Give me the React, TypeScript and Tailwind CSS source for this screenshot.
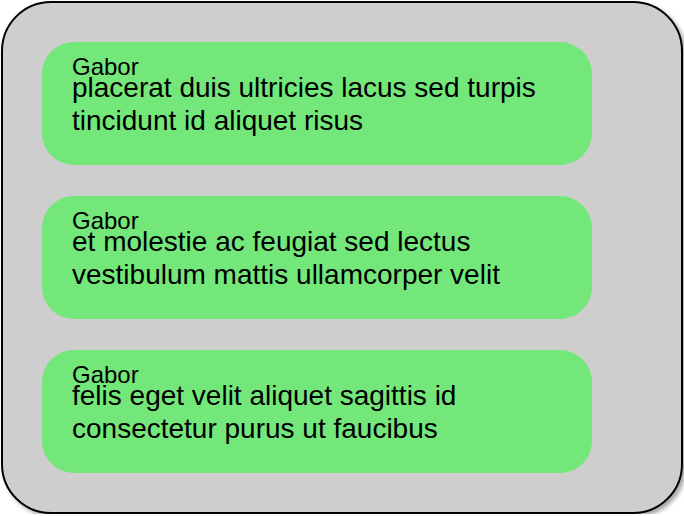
const messages = [
  {
    author: "Gabor",
    lines: ["placerat duis ultricies lacus sed turpis", "tincidunt id aliquet risus"],
  },
  {
    author: "Gabor",
    lines: ["et molestie ac feugiat sed lectus", "vestibulum mattis ullamcorper velit"],
  },
  {
    author: "Gabor",
    lines: ["felis eget velit aliquet sagittis id", "consectetur purus ut faucibus"],
  },
];

export default function App() {
  return (
    <div className="ml-[1px] mt-[1px] h-[513px] w-[682px] rounded-[50px] border-2 border-black bg-[#cecece] pl-[39px] pt-[39px] font-['Liberation_Sans',Arial,sans-serif] text-black shadow-[3px_3px_4px_rgba(0,0,0,0.35)]">
      <div className="flex flex-col gap-[31px]">
        {messages.map((m, i) => (
          <div key={i} className="w-[550px] rounded-[32px] bg-[#74e77a] pb-[28px] pl-[30px] pt-[22px]">
            <p className="text-[24px] leading-[6px]">{m.author}</p>
            <p className="mt-[1px] text-[28px] leading-[33px]">
              {m.lines[0]}
              <br />
              {m.lines[1]}
            </p>
          </div>
        ))}
      </div>
    </div>
  );
}
